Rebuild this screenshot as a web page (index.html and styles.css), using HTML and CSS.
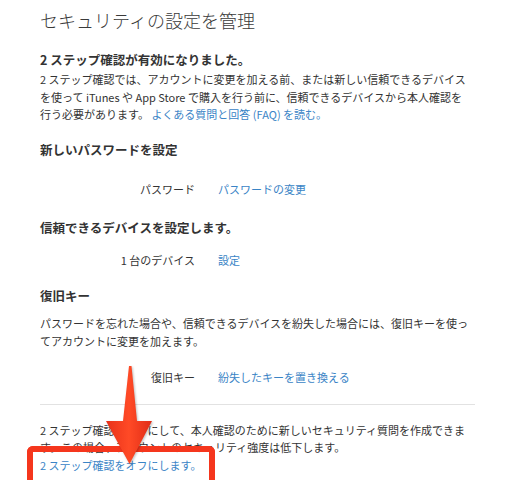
FILE: index.html
```html
<!DOCTYPE html>
<html lang="ja">
<head>
	<meta charset="UTF-8">
	<title>セキュリティの設定を管理</title>
	<link rel="stylesheet" href="styles.css">
</head>
<body>
	<div id="page">
		<h1 class="title">セキュリティの設定を管理</h1>

		<div class="section first">
			<h2>2 ステップ確認が有効になりました。</h2>
			<p class="text">2 ステップ確認では、アカウントに変更を加える前、または新しい信頼できるデバイスを使って iTunes や App Store で購入を行う前に、信頼できるデバイスから本人確認を<br>行う必要があります。 <a href="javascript:;">よくある質問と回答 (FAQ) を読む。</a></p>
		</div>

		<div class="section pw">
			<h2>新しいパスワードを設定</h2>
			<div class="row">
				<span class="label">パスワード</span>
				<a href="javascript:;">パスワードの変更</a>
			</div>
		</div>

		<div class="section dev">
			<h2>信頼できるデバイスを設定します。</h2>
			<div class="row">
				<span class="label">1 台のデバイス</span>
				<a href="javascript:;">設定</a>
			</div>
		</div>

		<div class="section key">
			<h2>復旧キー</h2>
			<p class="text">パスワードを忘れた場合や、信頼できるデバイスを紛失した場合には、復旧キーを使ってアカウントに変更を加えます。</p>
			<div class="row">
				<span class="label">復旧キー</span>
				<a href="javascript:;">紛失したキーを置き換える</a>
			</div>
		</div>

		<div class="section off">
			<p class="text">2 ステップ確認をオフにして、本人確認のために新しいセキュリティ質問を作成できます。この場合、アカウントのセキュリティ強度は低下します。<br><a href="javascript:;">2 ステップ確認をオフにします。</a></p>
		</div>
	</div>

	<div class="mark-box"></div>
	<svg class="mark-arrow" width="506" height="480" viewBox="0 0 506 480">
		<defs>
			<linearGradient id="shade" x1="0" y1="0" x2="1" y2="0">
				<stop offset="0" stop-color="#e8321a"/>
				<stop offset="0.5" stop-color="#ff4a26"/>
				<stop offset="1" stop-color="#e02c16"/>
			</linearGradient>
		</defs>
		<polygon points="129,366 131.5,366 137,421 152,421 129.5,464 106,421 123,421" fill="url(#shade)"/>
	</svg>
</body>
</html>
```

FILE: styles.css
```css
* {
	margin: 0;
	padding: 0;
}
body {
	background: #fff;
	color: #333;
	font-family: "Noto Sans CJK JP", "Noto Sans", sans-serif;
	position: relative;
	width: 506px;
	height: 480px;
	overflow: hidden;
}
a {
	color: #3a84c6;
	text-decoration: none;
}
#page {
	padding-left: 40px;
	width: 435px;
}
.title {
	font-size: 18px;
	font-weight: 300;
	line-height: 24px;
	padding-top: 8px;
	color: #3a3a3a;
}
h2 {
	font-size: 12.5px;
	font-weight: bold;
	line-height: 20px;
	color: #333;
}
.text {
	font-size: 11px;
	line-height: 17.5px;
}
.row {
	display: flex;
	gap: 23px;
	font-size: 11px;
	line-height: 18px;
}
.row .label {
	width: 155px;
	text-align: right;
}
.first {
	margin-top: 18px;
}
.first .text {
	margin-top: 1px;
}
.pw {
	margin-top: 16px;
}
.pw .row {
	margin-top: 20px;
}
.dev {
	margin-top: 20px;
}
.dev .row {
	margin-top: 13px;
}
.key {
	margin-top: 17px;
}
.key .text {
	margin-top: 8px;
	line-height: 18px;
}
.key .row {
	margin-top: 18px;
}
.off {
	margin-top: 18px;
	border-top: 1px solid #e2e2e2;
	padding-top: 17px;
}
.mark-box {
	position: absolute;
	left: 27px;
	top: 446px;
	width: 176px;
	height: 28px;
	border: 6px solid #f5361d;
	border-bottom: 0;
	border-radius: 6px 6px 0 0;
}
.mark-arrow {
	position: absolute;
	left: 0;
	top: 0;
	pointer-events: none;
	filter: drop-shadow(1px 1px 1px rgba(0,0,0,0.25));
}
```
